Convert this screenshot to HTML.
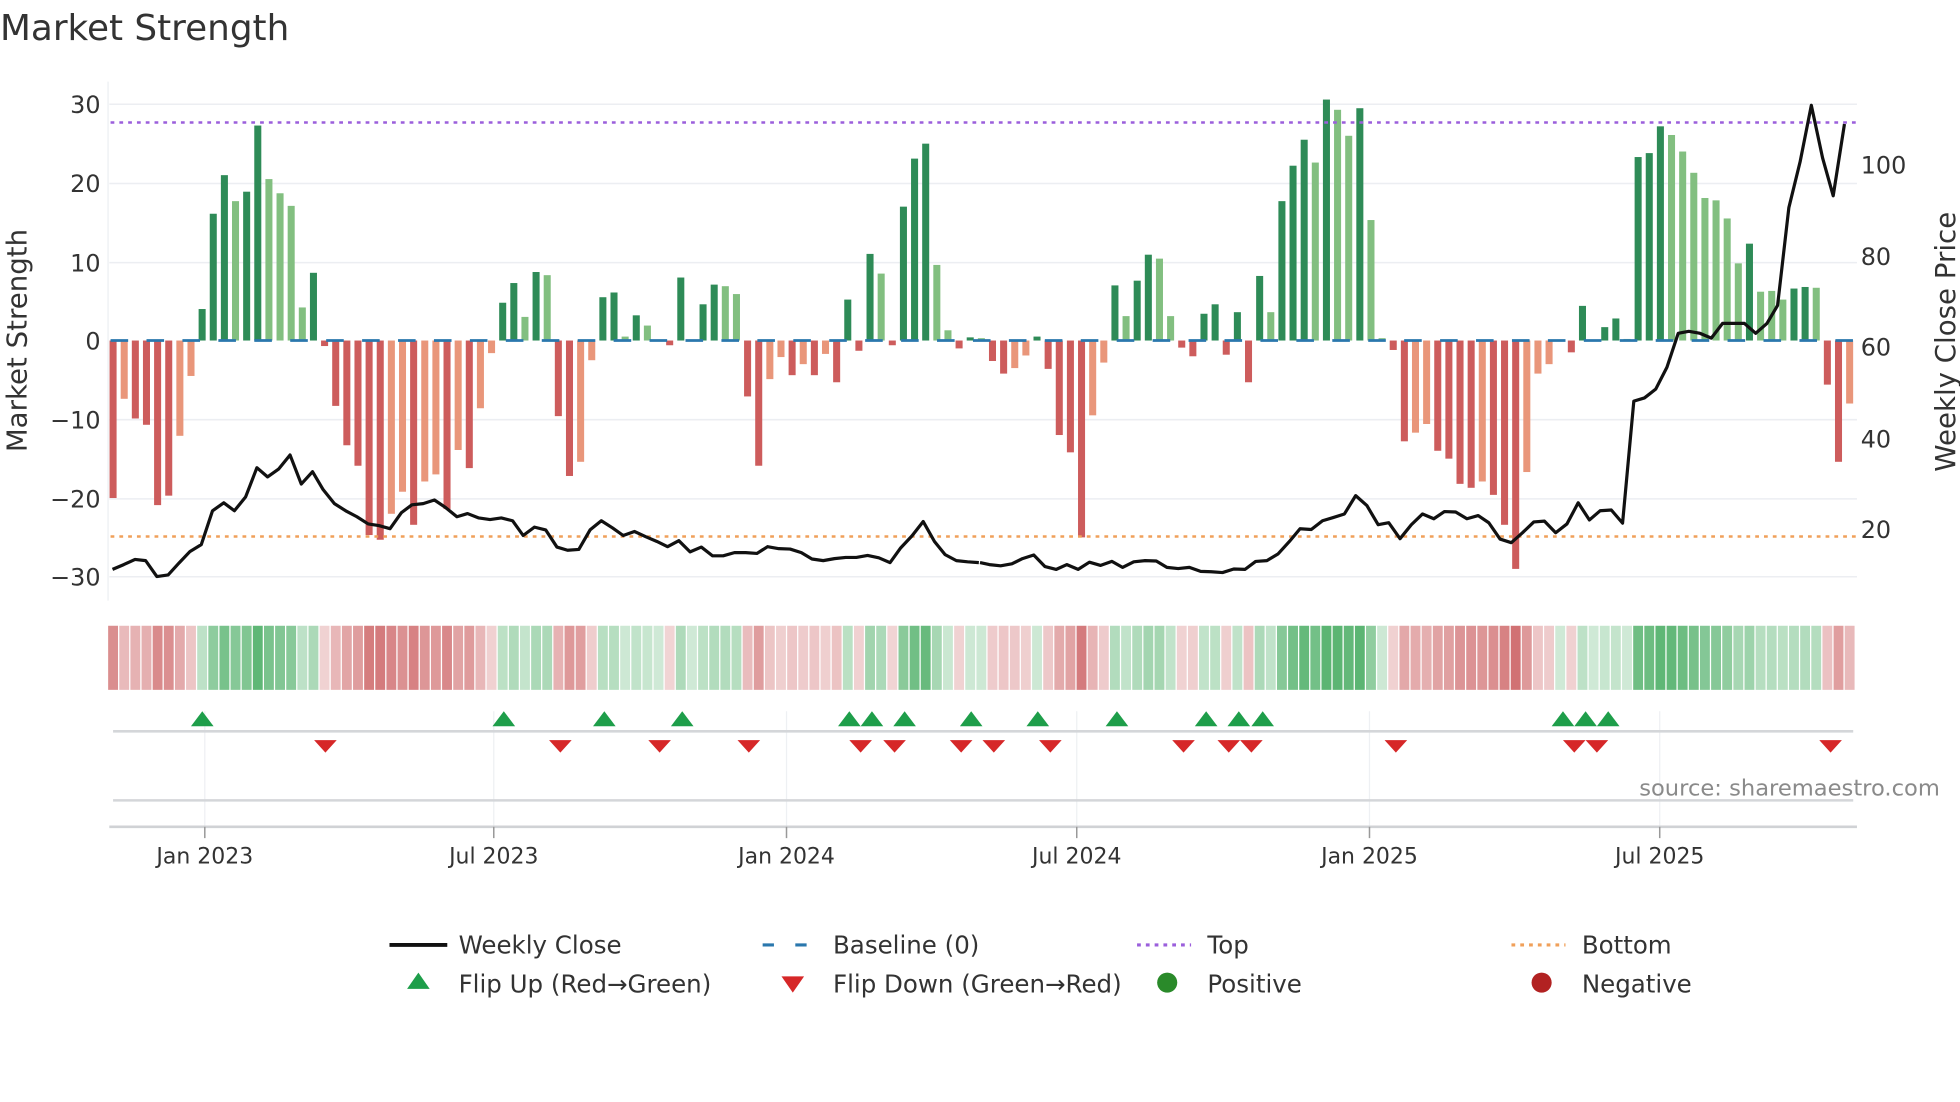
<!DOCTYPE html>
<html><head><meta charset="utf-8"><style>
html,body{margin:0;padding:0;background:#fff;}
svg{display:block;font-family:"DejaVu Sans","Liberation Sans",sans-serif;}
</style></head><body>
<svg id="s" width="1960" height="1102" viewBox="0 0 1560 877" preserveAspectRatio="none" xmlns="http://www.w3.org/2000/svg">
<rect width="1560" height="877" fill="#fff"/>
<text x="0" y="32" font-size="28.5" fill="#333">Market Strength</text>
<g stroke="#eceef2" stroke-width="1.2">
<line x1="87" x2="1478" y1="83" y2="83"/><line x1="87" x2="1478" y1="146" y2="146"/>
<line x1="87" x2="1478" y1="209" y2="209"/><line x1="87" x2="1478" y1="334" y2="334"/>
<line x1="87" x2="1478" y1="397" y2="397"/><line x1="87" x2="1478" y1="459" y2="459"/>
</g>
<line x1="86" x2="86" y1="65" y2="478" stroke="#eceef2" stroke-width="1"/>
<g font-size="19" fill="#333" text-anchor="end">
<text x="80" y="90">30</text><text x="80" y="153">20</text><text x="80" y="216">10</text>
<text x="80" y="278">0</text><text x="80" y="341">−10</text><text x="80" y="404">−20</text><text x="80" y="466">−30</text>
</g>
<g font-size="19" fill="#333">
<text x="1481" y="138">100</text><text x="1481" y="211">80</text><text x="1481" y="283">60</text>
<text x="1481" y="356">40</text><text x="1481" y="428">20</text>
</g>
<text transform="translate(21,271) rotate(-90)" font-size="22" fill="#333" text-anchor="middle">Market Strength</text>
<text transform="translate(1556,272) rotate(-90)" font-size="22" fill="#333" text-anchor="middle">Weekly Close Price</text>
<g id="bars"></g>
<line x1="88" x2="1478" y1="271" y2="271" stroke="#2a77ad" stroke-width="2.2" stroke-dasharray="14 14.6"/>
<line x1="88" x2="1478" y1="97.5" y2="97.5" stroke="#9b5fdc" stroke-width="2" stroke-dasharray="3 4"/>
<line x1="88" x2="1478" y1="427" y2="427" stroke="#f0a05a" stroke-width="2" stroke-dasharray="3 4"/>
<g fill="none" stroke="#111" stroke-width="3.2" stroke-linejoin="round">
<polyline vector-effect="non-scaling-stroke" transform="matrix(0.4975 0 0 0.3173 0 -1.24)" points="180,1432 198,1420 216,1407 233,1410 251,1450 269,1446 287,1415 304,1387 322,1370 340,1285 358,1265 375,1285 393,1250 411,1177 428,1200 446,1180 464,1145 482,1218 500,1187 517,1232 535,1267 553,1285 571,1300 589,1318 606,1322 624,1330 642,1290 659,1270 677,1267 695,1258 713,1277 731,1300 748,1292 766,1303 784,1307 802,1303 820,1310 837,1347 855,1326 873,1333 891,1376 908,1384 926,1382 944,1333 962,1310 980,1328 997,1347 1015,1337 1033,1350 1051,1362 1068,1375 1086,1360 1104,1388 1122,1376 1140,1398 1157,1398 1175,1390 1193,1390 1211,1392 1228,1375 1246,1380 1264,1381 1282,1390 1299,1406 1317,1410 1335,1405 1353,1402 1370,1402 1388,1397 1406,1403 1424,1415 1441,1378 1459,1348 1477,1312 1495,1362 1512,1395 1530,1410 1548,1413 1566,1415"/>
<polyline vector-effect="non-scaling-stroke" transform="matrix(0.4975 0 0 0.3173 780 -1.24)" points="0,1415 15,1420 33,1423 51,1418 68,1405 86,1396 104,1425 122,1432 139,1420 157,1432 175,1414 193,1422 211,1412 228,1427 246,1413 264,1410 282,1411 299,1427 317,1430 335,1427 353,1437 370,1438 388,1440 406,1431 424,1432 441,1412 459,1410 477,1393 495,1362 512,1330 530,1332 548,1310 565,1302 583,1293 601,1247 619,1272 637,1320 654,1315 672,1355 690,1320 708,1293 726,1305 743,1287 761,1288 779,1305 797,1297 814,1315 832,1356 850,1365 868,1340 886,1313 903,1311 921,1340 939,1318 957,1265 975,1308 992,1285 1010,1283 1028,1316 1046,1010 1063,1002 1081,980 1099,925 1117,840 1134,835 1152,840 1170,852 1188,815 1205,815 1223,815 1241,840 1259,815 1276,770 1294,525 1312,410 1330,268 1348,400 1365,495 1383,315"/>
</g>
<g id="heat"></g>
<g stroke="#eef0f3" stroke-width="1">
<line x1="163" x2="163" y1="566" y2="658"/><line x1="393" x2="393" y1="566" y2="658"/>
<line x1="626" x2="626" y1="566" y2="658"/><line x1="857" x2="857" y1="566" y2="658"/>
<line x1="1090" x2="1090" y1="566" y2="658"/><line x1="1321" x2="1321" y1="566" y2="658"/>
</g>
<line x1="90" x2="1475" y1="582" y2="582" stroke="#d4d6d9" stroke-width="2"/>
<line x1="90" x2="1475" y1="637" y2="637" stroke="#d4d6d9" stroke-width="2"/>
<line x1="87" x2="1478" y1="658" y2="658" stroke="#d0d2d5" stroke-width="2"/>
<g id="flips"></g>
<g stroke="#999" stroke-width="1.2">
<line x1="163" x2="163" y1="658" y2="667"/><line x1="393" x2="393" y1="658" y2="667"/>
<line x1="626" x2="626" y1="658" y2="667"/><line x1="857" x2="857" y1="658" y2="667"/>
<line x1="1090" x2="1090" y1="658" y2="667"/><line x1="1321" x2="1321" y1="658" y2="667"/>
</g>
<g font-size="17.5" fill="#333" text-anchor="middle">
<text x="163" y="687">Jan 2023</text><text x="393" y="687">Jul 2023</text><text x="626" y="687">Jan 2024</text>
<text x="857" y="687">Jul 2024</text><text x="1090" y="687">Jan 2025</text><text x="1321" y="687">Jul 2025</text>
</g>
<text x="1544" y="633" font-size="18" fill="#8a8a8a" text-anchor="end">source: sharemaestro.com</text>
<g font-size="19.5" fill="#333">
<line x1="310" x2="356" y1="752" y2="752" stroke="#111" stroke-width="3"/>
<text x="365" y="759">Weekly Close</text>
<line x1="607" x2="651" y1="752" y2="752" stroke="#2a77ad" stroke-width="2.5" stroke-dasharray="9 17"/>
<text x="663" y="759">Baseline (0)</text>
<line x1="905" x2="948" y1="752" y2="752" stroke="#9b5fdc" stroke-width="2.5" stroke-dasharray="3 4"/>
<text x="961" y="759">Top</text>
<line x1="1203" x2="1246" y1="752" y2="752" stroke="#f0a05a" stroke-width="2.5" stroke-dasharray="3 4"/>
<text x="1259" y="759">Bottom</text>
<polygon points="324,787 342,787 333,774" fill="#1e9e4a"/>
<text x="365" y="790">Flip Up (Red→Green)</text>
<polygon points="622,777 640,777 631,790" fill="#d62728"/>
<text x="663" y="790">Flip Down (Green→Red)</text>
<circle cx="929" cy="782" r="8" fill="#2a8a2a"/>
<text x="961" y="790">Positive</text>
<circle cx="1227" cy="782" r="8" fill="#b22222"/>
<text x="1259" y="790">Negative</text>
</g>
</svg>
<script>
var V=[-20,-7.4,-9.9,-10.7,-20.9,-19.7,-12.1,-4.5,4,16.1,21,17.7,18.9,27.3,20.5,18.7,17.1,4.2,8.6,-0.7,-8.3,-13.3,-15.9,-24.7,-25.3,-22,-19.2,-23.4,-17.9,-17,-21.4,-13.9,-16.2,-8.6,-1.6,4.8,7.3,3,8.7,8.3,-9.6,-17.2,-15.4,-2.5,5.5,6.1,0.5,3.2,1.9,0.1,-0.6,8,0.1,4.6,7.1,6.9,5.9,-7.1,-15.9,-4.9,-2.1,-4.4,-3,-4.4,-1.7,-5.3,5.2,-1.3,11,8.5,-0.6,17,23.1,25,9.6,1.3,-1,0.4,0.3,
-2.6,-4.2,-3.5,-1.9,0.5,-3.6,-12,-14.2,-25,-9.5,-2.8,7,3.1,7.6,10.9,10.4,3.1,-0.9,-2,3.4,4.6,-1.8,3.6,-5.3,8.2,3.6,17.7,22.2,25.5,22.6,30.6,29.3,26,29.5,15.3,0.3,-1.2,-12.8,-11.7,-10.6,-14,-15,-18.2,-18.7,-17.9,-19.6,-23.4,-29,-16.7,-4.2,-3,0.1,-1.5,4.4,0.1,1.7,2.8,0.2,23.3,23.8,27.2,26.1,24,21.3,18.1,17.8,15.5,9.8,12.3,6.2,6.3,5.2,6.6,6.8,6.7,-5.6,-15.4,-8];
var L={1:1,6:1,7:1,11:1,14:1,15:1,16:1,17:1,25:1,26:1,28:1,29:1,31:1,33:1,34:1,37:1,39:1,42:1,43:1,46:1,48:1,55:1,56:1,59:1,60:1,62:1,64:1,69:1,74:1,75:1,78:1,81:1,82:1,88:1,89:1,91:1,94:1,95:1,104:1,108:1,110:1,111:1,113:1,114:1,117:1,118:1,123:1,127:1,128:1,129:1,136:1,140:1,141:1,142:1,143:1,144:1,145:1,146:1,148:1,149:1,150:1,153:1,156:1};
var NS="http://www.w3.org/2000/svg";
function el(t,a,p){var e=document.createElementNS(NS,t);for(var k in a)e.setAttribute(k,a[k]);p.appendChild(e);return e;}
var B=document.getElementById('bars'),H=document.getElementById('heat'),F=document.getElementById('flips');
for(var i=0;i<V.length;i++){var v=V[i],x=90+i*8.86,h=Math.abs(v)*6.267,l=L[i];
var c=v>=0?(l?'#82bf80':'#2e8b57'):(l?'#e9967a':'#cd5c5c');
el('rect',{x:x-2.8,y:v>=0?271-h:271,width:5.6,height:Math.max(h,0.6),fill:c},B);
var a=0.25+0.6*Math.min(Math.abs(v)/28,1);
el('rect',{x:x-4.43+0.5,y:498,width:7.86,height:51,fill:v>=0?'#3fa85a':'#c9585a','fill-opacity':a.toFixed(2)},H);}
var up=[161,401,481,543,676,694,720,773,826,889,960,986,1005,1244,1262,1280];
var dn=[259,446,525,596,685,712,765,791,836,942,978,996,1111,1253,1271,1457];
up.forEach(function(x){el('polygon',{points:(x-9)+',578 '+(x+9)+',578 '+x+',566',fill:'#1e9e4a'},F);});
dn.forEach(function(x){el('polygon',{points:(x-9)+',589 '+(x+9)+',589 '+x+',599',fill:'#d62728'},F);});
</script>
</body></html>
